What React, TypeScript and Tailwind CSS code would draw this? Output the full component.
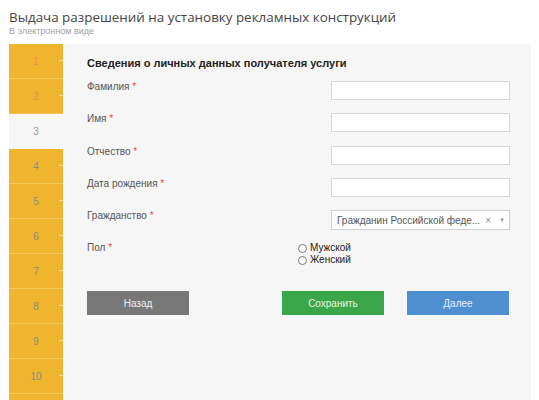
import React from "react";

const steps = ["1", "2", "3", "4", "5", "6", "7", "8", "9", "10", ""];

const fields = ["Фамилия", "Имя", "Отчество", "Дата рождения"];

function Label({ text }: { text: string }) {
  return (
    <div className="text-[10px] leading-[12px] text-[#555]">
      {text} <span className="text-[#e0493d]">*</span>
    </div>
  );
}

export default function App() {
  return (
    <div className="h-[400px] w-[539px] overflow-hidden bg-white font-['Liberation_Sans',Arial,sans-serif]">
      <div className="h-[44px] px-[9px] pt-[8px]">
        <h1 className="font-['Open_Sans',sans-serif] text-[13.4px] leading-[18px] text-[#444]">
          Выдача разрешений на установку рекламных конструкций
        </h1>
        <p className="text-[9px] leading-[11px] text-[#a0a0a0]">В электронном виде</p>
      </div>

      <div className="ml-[9px] mr-[8px] flex h-[356px] bg-[#f6f6f6]">
        {/* step sidebar */}
        <div className="flex w-[54px] shrink-0 flex-col">
          {steps.map((s, i) => {
            const active = s === "3";
            const done = i < 2;
            return (
              <div
                key={i}
                className={
                  "relative flex h-[35px] shrink-0 items-center justify-center text-[10px] " +
                  (active
                    ? "bg-[#f6f6f6] text-[#9a9a9a]"
                    : "border-b border-[#f5c65a] bg-[#efb52e] " +
                      (done ? "text-[#f3874d]" : "text-[#8c8c7a]"))
                }
              >
                {s}
                {!active && (
                  <span className="absolute right-0 top-[16px] h-px w-[4px] bg-[#f8dc98]" />
                )}
              </div>
            );
          })}
        </div>

        {/* form */}
        <div className="flex-1 pl-[24px] pr-[21px] pt-[12px]">
          <h2 className="text-[11px] font-bold leading-[14px] text-[#222]">
            Сведения о личных данных получателя услуги
          </h2>

          <div className="mt-[11px] flex flex-col">
            {fields.map((f) => (
              <div key={f} className="flex h-[32.3px] items-start justify-between">
                <Label text={f} />
                <div className="h-[19px] w-[179px] border border-[#d6d6d6] bg-white" />
              </div>
            ))}

            <div className="flex h-[32px] items-start justify-between">
              <Label text="Гражданство" />
              <div className="flex h-[20px] w-[179px] items-center border border-[#d0d0d0] bg-white pl-[5px] pr-[4px] text-[10px] text-[#555]">
                <span className="flex-1 whitespace-nowrap">Гражданин Российской феде...</span>
                <span className="ml-[4px] text-[10px] text-[#888]">×</span>
                <span className="ml-[8px] text-[6px] text-[#999]">▼</span>
              </div>
            </div>

            <div className="flex h-[50px] items-start">
              <div className="w-[211px]">
                <Label text="Пол" />
              </div>
              <div className="flex flex-col text-[10px] leading-[12px] text-[#222]">
                {["Мужской", "Женский"].map((r) => (
                  <label key={r} className="flex items-center gap-[3px]">
                    <span className="inline-block h-[9px] w-[9px] rounded-full border border-[#777] bg-white" />
                    {r}
                  </label>
                ))}
              </div>
            </div>
          </div>

          <div className="mt-[-1px] flex items-center">
            <button className="h-[24px] w-[102px] bg-[#787878] text-[10px] text-[#eee]">
              Назад
            </button>
            <button className="ml-[93px] h-[24px] w-[102px] bg-[#3aa64a] text-[10px] text-[#e6f5e6]">
              Сохранить
            </button>
            <button className="ml-[23px] h-[24px] w-[102px] bg-[#4d8fd1] text-[10px] text-[#e8f0fa]">
              Далее
            </button>
          </div>
        </div>
      </div>
    </div>
  );
}
